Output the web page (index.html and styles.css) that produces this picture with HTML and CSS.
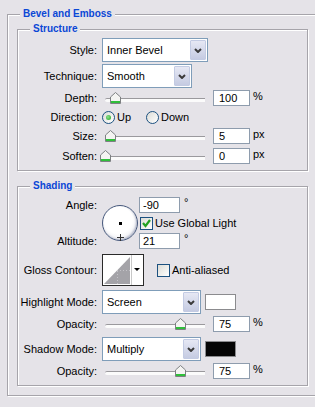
FILE: index.html
```html
<!DOCTYPE html>
<html lang="en">
<head>
    <meta charset="UTF-8">
    <title>Bevel and Emboss</title>
    <link rel="stylesheet" href="styles.css">
</head>
<body>
    <div class="group outer">
        <div class="group-title">Bevel and Emboss</div>

        <div class="group inner structure">
            <div class="group-title">Structure</div>

            <div class="row row-select first">
                <span class="label">Style:</span>
                <div class="select style-select">
                    <span class="select-text">Inner Bevel</span>
                    <span class="drop"><svg width="8" height="5" viewBox="0 0 8 5"><polyline points="1,1 4,4 7,1" fill="none" stroke="#3a3a3a" stroke-width="2"/></svg></span>
                </div>
            </div>

            <div class="row row-select">
                <span class="label">Technique:</span>
                <div class="select technique-select">
                    <span class="select-text">Smooth</span>
                    <span class="drop"><svg width="8" height="5" viewBox="0 0 8 5"><polyline points="1,1 4,4 7,1" fill="none" stroke="#3a3a3a" stroke-width="2"/></svg></span>
                </div>
            </div>

            <div class="row row-field">
                <span class="label">Depth:</span>
                <div class="slider"><span class="thumb" style="left: 10%"><svg width="11" height="12" viewBox="0 0 11 12"><path d="M0.5 11.5 V5 L5.5 0.5 L10.5 5 V11.5 Z" fill="#f4f4f2" stroke="#7d8082"/><rect x="1" y="9" width="9" height="2" fill="#2fbf3a"/></svg></span></div>
                <span class="field">100</span>
                <span class="unit">%</span>
            </div>

            <div class="row row-radio">
                <span class="label">Direction:</span>
                <span class="radio-opt up"><span class="radio checked"></span>Up</span>
                <span class="radio-opt"><span class="radio"></span>Down</span>
            </div>

            <div class="row row-field">
                <span class="label">Size:</span>
                <div class="slider"><span class="thumb" style="left: 5%"><svg width="11" height="12" viewBox="0 0 11 12"><path d="M0.5 11.5 V5 L5.5 0.5 L10.5 5 V11.5 Z" fill="#f4f4f2" stroke="#7d8082"/><rect x="1" y="9" width="9" height="2" fill="#2fbf3a"/></svg></span></div>
                <span class="field">5</span>
                <span class="unit">px</span>
            </div>

            <div class="row row-field soften">
                <span class="label">Soften:</span>
                <div class="slider"><span class="thumb" style="left: 0%"><svg width="11" height="12" viewBox="0 0 11 12"><path d="M0.5 11.5 V5 L5.5 0.5 L10.5 5 V11.5 Z" fill="#f4f4f2" stroke="#7d8082"/><rect x="1" y="9" width="9" height="2" fill="#2fbf3a"/></svg></span></div>
                <span class="field">0</span>
                <span class="unit">px</span>
            </div>
        </div>

        <div class="group inner shading">
            <div class="group-title">Shading</div>

            <div class="angle-grid">
                <span class="label angle-label">Angle:</span>
                <div class="dial"><span class="dial-dot"></span><span class="dial-cross"></span></div>
                <span class="angle-value"><span class="field short">-90</span><span class="deg">°</span></span>
                <span class="check-opt global"><span class="check checked"><svg width="11" height="11" viewBox="0 0 11 11"><polyline points="2,5 4.5,8 9,2" fill="none" stroke="#21a121" stroke-width="2.2"/></svg></span>Use Global Light</span>
                <span class="label altitude-label">Altitude:</span>
                <span class="altitude-value"><span class="field short">21</span><span class="deg">°</span></span>
            </div>

            <div class="row row-contour">
                <span class="label">Gloss Contour:</span>
                <svg class="contour" width="42" height="32" viewBox="0 0 42 32">
                    <rect x="0.5" y="0.5" width="41" height="31" fill="#ffffff" stroke="#2a2a2a"/>
                    <polygon points="2,30 28,3 28,30" fill="#a4a3a8"/>
                    <line x1="15" y1="16.5" x2="28" y2="16.5" stroke="#c4c3c8" stroke-dasharray="1 2"/>
                    <line x1="15.5" y1="17" x2="15.5" y2="30" stroke="#c4c3c8" stroke-dasharray="1 2"/>
                    <line x1="29.5" y1="1" x2="29.5" y2="31" stroke="#c8c8c8"/>
                    <polygon points="32,14 38,14 35,17" fill="#000"/>
                </svg>
                <span class="check-opt anti"><span class="check"></span>Anti-aliased</span>
            </div>

            <div class="row row-select mode">
                <span class="label">Highlight Mode:</span>
                <div class="select mode-select">
                    <span class="select-text">Screen</span>
                    <span class="drop"><svg width="8" height="5" viewBox="0 0 8 5"><polyline points="1,1 4,4 7,1" fill="none" stroke="#3a3a3a" stroke-width="2"/></svg></span>
                </div>
                <span class="swatch"></span>
            </div>

            <div class="row row-field opacity">
                <span class="label">Opacity:</span>
                <div class="slider"><span class="thumb" style="left: 75%"><svg width="11" height="12" viewBox="0 0 11 12"><path d="M0.5 11.5 V5 L5.5 0.5 L10.5 5 V11.5 Z" fill="#f4f4f2" stroke="#7d8082"/><rect x="1" y="9" width="9" height="2" fill="#2fbf3a"/></svg></span></div>
                <span class="field">75</span>
                <span class="unit">%</span>
            </div>

            <div class="row row-select mode shadow">
                <span class="label">Shadow Mode:</span>
                <div class="select mode-select">
                    <span class="select-text">Multiply</span>
                    <span class="drop"><svg width="8" height="5" viewBox="0 0 8 5"><polyline points="1,1 4,4 7,1" fill="none" stroke="#3a3a3a" stroke-width="2"/></svg></span>
                </div>
                <span class="swatch black"></span>
            </div>

            <div class="row row-field opacity">
                <span class="label">Opacity:</span>
                <div class="slider"><span class="thumb" style="left: 75%"><svg width="11" height="12" viewBox="0 0 11 12"><path d="M0.5 11.5 V5 L5.5 0.5 L10.5 5 V11.5 Z" fill="#f4f4f2" stroke="#7d8082"/><rect x="1" y="9" width="9" height="2" fill="#2fbf3a"/></svg></span></div>
                <span class="field">75</span>
                <span class="unit">%</span>
            </div>
        </div>
    </div>
</body>
</html>
```

FILE: styles.css
```css
* {
    box-sizing: border-box;
}

body {
    margin: 0;
    width: 315px;
    height: 407px;
    overflow: hidden;
    background-color: #e5e3e8;
    color: #000;
    font-family: "Liberation Sans", Arial, sans-serif;
    font-size: 11px;
}

/* etched group boxes */
.group {
    border: 1px solid #a6a4aa;
    box-shadow: inset 1px 1px 0 #fff, 1px 1px 0 #fff;
}

.group-title {
    display: table;
    margin: -7px 0 0 12px;
    padding: 0 3px;
    line-height: 12px;
    background-color: #e5e3e8;
    color: #0b47d6;
    font-size: 10px;
    font-weight: bold;
}

/* the outer box runs on past the right edge of the window */
.outer {
    width: 308px;
    height: 382px;
    margin: 14px 0 0 7px;
    border-right: none;
}

.inner {
    width: 291px;
    margin-left: 9px;
    padding-bottom: 6px;
}

.structure {
    margin-top: 9px;
}

.shading {
    margin-top: 15px;
}

/* rows */
.row {
    display: flex;
    align-items: center;
}

.label {
    width: 79px;
    margin-right: 5px;
    text-align: right;
    white-space: nowrap;
}

.row-select {
    height: 24px;
    margin-top: 2px;
}

.row-select.first {
    margin-top: 3px;
}

.row-field {
    height: 16px;
    margin-top: 2px;
}

.row-field.soften {
    margin-top: 4px;
}

.row-radio {
    height: 22px;
}

.row-radio + .row-field {
    margin-top: 0;
}

/* dropdowns */
.select {
    display: flex;
    align-items: stretch;
    height: 24px;
    padding: 1px;
    border: 1px solid #7f9db9;
    background: #fff;
}

.select-text {
    flex: 1;
    padding-left: 3px;
    line-height: 20px;
}

.drop {
    width: 16px;
    display: flex;
    align-items: center;
    justify-content: center;
    border: 1px solid #c3cbe3;
    border-radius: 1px;
    background: linear-gradient(#e6e8f4, #c5cbe2);
}

.style-select {
    width: 106px;
}

.technique-select {
    width: 90px;
}

.mode-select {
    width: 99px;
}

/* sliders */
.slider {
    position: relative;
    width: 100px;
    height: 16px;
    margin-left: 3px;
}

.slider::before {
    content: "";
    position: absolute;
    left: 0;
    right: 0;
    top: 8px;
    height: 3px;
    border-top: 1px solid #9a999d;
    border-radius: 2px 0 0 2px;
    background: #fbfbfb;
}

.thumb {
    position: absolute;
    top: 2px;
    width: 11px;
    height: 12px;
    transform: translateX(-5px);
}

.thumb svg {
    display: block;
}

.field {
    width: 37px;
    height: 16px;
    margin-left: 8px;
    padding-left: 5px;
    border: 1px solid #8e9cad;
    background: #fff;
    line-height: 14px;
}

.field.short {
    width: 41px;
    margin-left: 0;
    padding-left: 3px;
}

.unit {
    margin-left: 3px;
    align-self: flex-start;
    line-height: 12px;
}

/* radio buttons and checkboxes */
.radio-opt,
.check-opt {
    display: flex;
    align-items: center;
}

.radio-opt.up {
    width: 44px;
}

.radio {
    position: relative;
    width: 13px;
    height: 13px;
    margin-right: 2px;
    border: 1px solid #1c5180;
    border-radius: 50%;
    background: linear-gradient(135deg, #dcdcd6, #ffffff);
}

.radio.checked::after {
    content: "";
    position: absolute;
    left: 3px;
    top: 3px;
    width: 5px;
    height: 5px;
    border-radius: 50%;
    background: radial-gradient(circle at 40% 40%, #8be28b, #21a121);
}

.check {
    display: flex;
    align-items: center;
    justify-content: center;
    width: 13px;
    height: 13px;
    margin-right: 2px;
    border: 1px solid #1c5180;
    background: linear-gradient(135deg, #dcdcd6, #ffffff);
}

/* angle / altitude block */
.angle-grid {
    display: grid;
    grid-template-columns: 79px 42px auto;
    grid-template-rows: 16px 20px 16px;
    align-items: center;
    margin-top: 5px;
}

.angle-grid .label {
    margin-right: 0;
}

.angle-label {
    grid-column: 1;
    grid-row: 1;
}

.altitude-label {
    grid-column: 1;
    grid-row: 3;
}

.dial {
    grid-column: 2;
    grid-row: 1 / 4;
    position: relative;
    width: 36px;
    height: 36px;
    margin-left: 5px;
    border: 1px solid #47597c;
    border-radius: 50%;
    background: radial-gradient(circle at 45% 40%, #ffffff 50%, #dcdde6 100%);
    box-shadow: inset -1px -1px 2px #b3b8c9;
}

.dial-dot {
    position: absolute;
    left: 16px;
    top: 16px;
    width: 3px;
    height: 3px;
    background: #000;
}

.dial-cross {
    position: absolute;
    left: 14px;
    top: 28px;
    width: 7px;
    height: 7px;
    background:
        linear-gradient(#333, #333) center / 1px 7px no-repeat,
        linear-gradient(#333, #333) center / 7px 1px no-repeat;
}

.angle-value,
.altitude-value {
    grid-column: 3;
    display: flex;
    align-items: flex-start;
    height: 16px;
}

.angle-value {
    grid-row: 1;
}

.altitude-value {
    grid-row: 3;
}

.deg {
    margin-left: 4px;
    line-height: 10px;
}

.global {
    grid-column: 3;
    grid-row: 2;
    padding-left: 1px;
}

/* contour */
.row-contour {
    height: 32px;
    margin-top: 5px;
}

.contour {
    display: block;
}

.anti {
    margin-left: 13px;
}

/* highlight / shadow */
.row-select.mode {
    margin-top: 4px;
}

.row-select.shadow {
    margin-top: 5px;
}

.swatch {
    width: 31px;
    height: 16px;
    margin-left: 4px;
    border: 1px solid #8b8b8e;
    background: #fff;
}

.swatch.black {
    background: #050505;
}

.row-field.opacity {
    margin-top: 2px;
}
```
